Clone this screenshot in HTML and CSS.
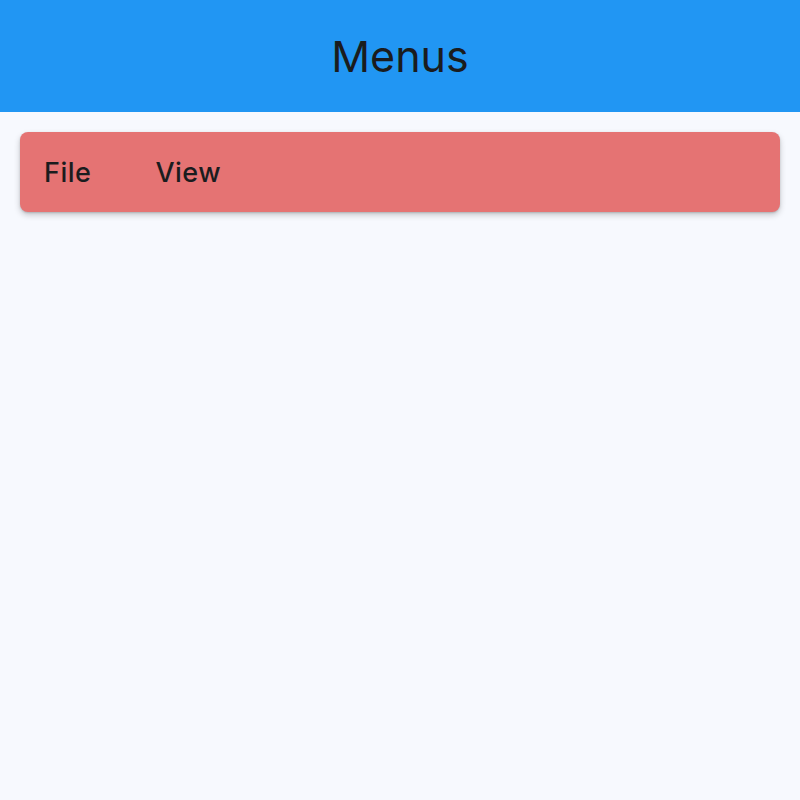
FILE: index.html
```html
<!DOCTYPE html>
<html lang="en">
<head>
    <meta charset="UTF-8">
    <meta name="viewport" content="width=device-width, initial-scale=1.0">
    <title>Menus</title>
    <link rel="stylesheet" href="styles.css">
</head>
<body>

    <header class="app-bar">
        <h1 class="app-title">Menus</h1>
    </header>

    <main class="content">
        <nav class="menu-bar">
            <button class="menu-item">File</button>
            <button class="menu-item">View</button>
        </nav>
    </main>

</body>
</html>
```

FILE: styles.css
```css
* {
    margin: 0;
    padding: 0;
    box-sizing: border-box;
}

body {
    font-family: 'Inter', 'Noto Sans', sans-serif;
    background: #f7f9fe;
    color: #1a1c1e;
    min-height: 100vh;
}

.app-bar {
    height: 112px;
    background: #2196f3;
    display: flex;
    justify-content: center;
    align-items: center;
}

.app-title {
    font-size: 43px;
    font-weight: 400;
    color: #1a1c1e;
}

.content {
    padding: 20px;
}

.menu-bar {
    display: flex;
    align-items: center;
    height: 80px;
    padding: 0 24px;
    gap: 64px;
    background: #e57373;
    border-radius: 8px;
    box-shadow: 0 3px 6px rgba(0, 0, 0, 0.2), 0 1px 2px rgba(0, 0, 0, 0.15);
}

.menu-item {
    background: none;
    border: none;
    font-family: inherit;
    font-size: 27px;
    font-weight: 500;
    letter-spacing: 0.5px;
    color: #1a1c1e;
    cursor: pointer;
}
```
